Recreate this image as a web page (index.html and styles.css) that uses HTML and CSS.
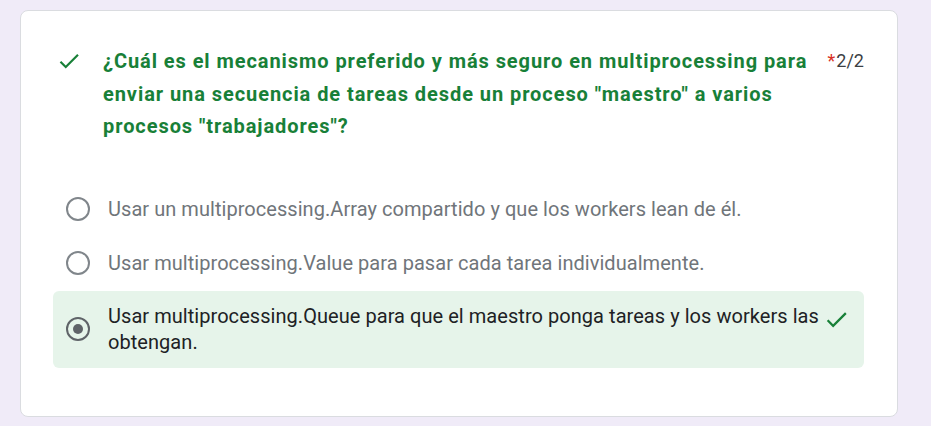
FILE: index.html
```html
<!DOCTYPE html>
<html lang="es">
<head>
<meta charset="utf-8">
<link rel="stylesheet" href="styles.css">
</head>
<body>
<div class="card">
  <div class="question">
    <svg class="q-check" viewBox="0 0 24 24" width="26" height="26"><path d="M9 16.17L4.83 12l-1.42 1.41L9 19 21 7l-1.41-1.41z" fill="#188038"/></svg>
    <div class="q-title">¿Cuál es el mecanismo preferido y más seguro en multiprocessing para enviar una secuencia de tareas desde un proceso "maestro" a varios procesos "trabajadores"?</div>
    <div class="score"><span class="req">*</span>2/2</div>
  </div>
  <div class="options">
    <div class="option">
      <span class="radio"></span>
      <span class="opt-text">Usar un multiprocessing.Array compartido y que los workers lean de él.</span>
    </div>
    <div class="option">
      <span class="radio"></span>
      <span class="opt-text">Usar multiprocessing.Value para pasar cada tarea individualmente.</span>
    </div>
    <div class="option selected">
      <span class="radio checked"></span>
      <span class="opt-text">Usar multiprocessing.Queue para que el maestro ponga tareas y los workers las obtengan.</span>
      <svg class="opt-check" viewBox="0 0 24 24" width="27" height="27"><path d="M9 16.17L4.83 12l-1.42 1.41L9 19 21 7l-1.41-1.41z" fill="#188038"/></svg>
    </div>
  </div>
</div>
</body>
</html>
```
FILE: styles.css
```css
html, body {
  margin: 0;
  padding: 0;
  background: #f0ebf8;
  font-family: Roboto, "Liberation Sans", Arial, sans-serif;
}
body {
  padding: 10px 33px 0 20px;
}
.card {
  background: #fff;
  border: 1px solid #dadce0;
  border-radius: 8px;
  padding: 34px 33px 48px 32px;
}
.question {
  display: flex;
  align-items: flex-start;
}
.q-check {
  flex: none;
  margin: 3px 0 0 3px;
}
.q-title {
  flex: 1;
  margin-left: 21px;
  font-size: 20px;
  font-weight: 700;
  letter-spacing: 0.93px;
  line-height: 32.5px;
  color: #188038;
}
.score {
  flex: none;
  margin-left: 8px;
  font-size: 18px;
  color: #3c4043;
  line-height: 32px;
}
.req {
  color: #d93025;
  margin-right: 1px;
}
.options {
  margin-top: 39px;
  display: flex;
  flex-direction: column;
}
.option {
  display: flex;
  align-items: center;
  padding: 14px 0 14px 13px;
  border-radius: 6px;
}
.radio {
  flex: none;
  width: 20px;
  height: 20px;
  border: 2px solid #80868b;
  border-radius: 50%;
  position: relative;
}
.radio.checked {
  border-color: #5f6368;
}
.radio.checked::after {
  content: "";
  position: absolute;
  left: 5px;
  top: 5px;
  width: 10px;
  height: 10px;
  border-radius: 50%;
  background: #5f6368;
}
.opt-text {
  margin-left: 18px;
  font-size: 20px;
  letter-spacing: 0.05px;
  line-height: 26px;
  color: #70757a;
}
.selected {
  margin-top: 1px;
  background: #e6f4ea;
  padding: 12px 14px 13px 13px;
}
.selected .opt-text {
  color: #202124;
  flex: 1;
  min-width: 0;
}
.opt-check {
  flex: none;
  align-self: flex-start;
  margin-top: 3px;
}
```
